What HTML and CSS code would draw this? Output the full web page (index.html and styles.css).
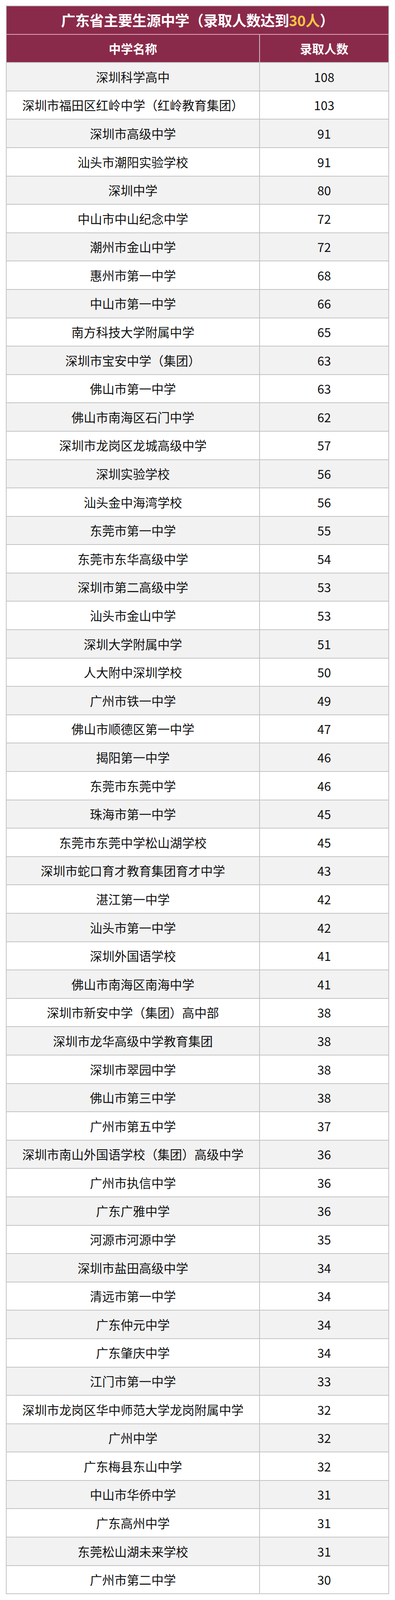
FILE: index.html
```html
<!DOCTYPE html>
<html lang="zh-CN">
<head>
<meta charset="utf-8">
<title>广东省主要生源中学</title>
<link rel="stylesheet" href="styles.css">
</head>
<body>
<div class="table">
  <div class="title">广东省主要生源中学（录取人数达到<span class="hl">30人</span>）</div>
  <div class="row head"><div class="c name">中学名称</div><div class="c num">录取人数</div></div>
  <div class="row"><div class="c name">深圳科学高中</div><div class="c num">108</div></div>
  <div class="row"><div class="c name">深圳市福田区红岭中学（红岭教育集团）</div><div class="c num">103</div></div>
  <div class="row"><div class="c name">深圳市高级中学</div><div class="c num">91</div></div>
  <div class="row"><div class="c name">汕头市潮阳实验学校</div><div class="c num">91</div></div>
  <div class="row"><div class="c name">深圳中学</div><div class="c num">80</div></div>
  <div class="row"><div class="c name">中山市中山纪念中学</div><div class="c num">72</div></div>
  <div class="row"><div class="c name">潮州市金山中学</div><div class="c num">72</div></div>
  <div class="row"><div class="c name">惠州市第一中学</div><div class="c num">68</div></div>
  <div class="row"><div class="c name">中山市第一中学</div><div class="c num">66</div></div>
  <div class="row"><div class="c name">南方科技大学附属中学</div><div class="c num">65</div></div>
  <div class="row"><div class="c name">深圳市宝安中学（集团）</div><div class="c num">63</div></div>
  <div class="row"><div class="c name">佛山市第一中学</div><div class="c num">63</div></div>
  <div class="row"><div class="c name">佛山市南海区石门中学</div><div class="c num">62</div></div>
  <div class="row"><div class="c name">深圳市龙岗区龙城高级中学</div><div class="c num">57</div></div>
  <div class="row"><div class="c name">深圳实验学校</div><div class="c num">56</div></div>
  <div class="row"><div class="c name">汕头金中海湾学校</div><div class="c num">56</div></div>
  <div class="row"><div class="c name">东莞市第一中学</div><div class="c num">55</div></div>
  <div class="row"><div class="c name">东莞市东华高级中学</div><div class="c num">54</div></div>
  <div class="row"><div class="c name">深圳市第二高级中学</div><div class="c num">53</div></div>
  <div class="row"><div class="c name">汕头市金山中学</div><div class="c num">53</div></div>
  <div class="row"><div class="c name">深圳大学附属中学</div><div class="c num">51</div></div>
  <div class="row"><div class="c name">人大附中深圳学校</div><div class="c num">50</div></div>
  <div class="row"><div class="c name">广州市铁一中学</div><div class="c num">49</div></div>
  <div class="row"><div class="c name">佛山市顺德区第一中学</div><div class="c num">47</div></div>
  <div class="row"><div class="c name">揭阳第一中学</div><div class="c num">46</div></div>
  <div class="row"><div class="c name">东莞市东莞中学</div><div class="c num">46</div></div>
  <div class="row"><div class="c name">珠海市第一中学</div><div class="c num">45</div></div>
  <div class="row"><div class="c name">东莞市东莞中学松山湖学校</div><div class="c num">45</div></div>
  <div class="row"><div class="c name">深圳市蛇口育才教育集团育才中学</div><div class="c num">43</div></div>
  <div class="row"><div class="c name">湛江第一中学</div><div class="c num">42</div></div>
  <div class="row"><div class="c name">汕头市第一中学</div><div class="c num">42</div></div>
  <div class="row"><div class="c name">深圳外国语学校</div><div class="c num">41</div></div>
  <div class="row"><div class="c name">佛山市南海区南海中学</div><div class="c num">41</div></div>
  <div class="row"><div class="c name">深圳市新安中学（集团）高中部</div><div class="c num">38</div></div>
  <div class="row"><div class="c name">深圳市龙华高级中学教育集团</div><div class="c num">38</div></div>
  <div class="row"><div class="c name">深圳市翠园中学</div><div class="c num">38</div></div>
  <div class="row"><div class="c name">佛山市第三中学</div><div class="c num">38</div></div>
  <div class="row"><div class="c name">广州市第五中学</div><div class="c num">37</div></div>
  <div class="row"><div class="c name">深圳市南山外国语学校（集团）高级中学</div><div class="c num">36</div></div>
  <div class="row"><div class="c name">广州市执信中学</div><div class="c num">36</div></div>
  <div class="row"><div class="c name">广东广雅中学</div><div class="c num">36</div></div>
  <div class="row"><div class="c name">河源市河源中学</div><div class="c num">35</div></div>
  <div class="row"><div class="c name">深圳市盐田高级中学</div><div class="c num">34</div></div>
  <div class="row"><div class="c name">清远市第一中学</div><div class="c num">34</div></div>
  <div class="row"><div class="c name">广东仲元中学</div><div class="c num">34</div></div>
  <div class="row"><div class="c name">广东肇庆中学</div><div class="c num">34</div></div>
  <div class="row"><div class="c name">江门市第一中学</div><div class="c num">33</div></div>
  <div class="row"><div class="c name">深圳市龙岗区华中师范大学龙岗附属中学</div><div class="c num">32</div></div>
  <div class="row"><div class="c name">广州中学</div><div class="c num">32</div></div>
  <div class="row"><div class="c name">广东梅县东山中学</div><div class="c num">32</div></div>
  <div class="row"><div class="c name">中山市华侨中学</div><div class="c num">31</div></div>
  <div class="row"><div class="c name">广东高州中学</div><div class="c num">31</div></div>
  <div class="row"><div class="c name">东莞松山湖未来学校</div><div class="c num">31</div></div>
  <div class="row"><div class="c name">广州市第二中学</div><div class="c num">30</div></div>
</div>
</body>
</html>
```

FILE: styles.css
```css
html, body {
  margin: 0;
  padding: 0;
  background: #ffffff;
}
body {
  padding: 14px 15px 0 15px;
  font-family: "Noto Sans CJK SC", "Noto Sans", sans-serif;
}
.table {
  width: 982px;
  box-sizing: border-box;
  border: 2px solid #c3c3c3;
  border-bottom: none;
}
.title {
  height: 70.6px;
  border-bottom: 2px solid #d9a6b8;
  background: #8a2a4a;
  color: #ffffff;
  font-size: 37px;
  font-weight: 700;
  display: flex;
  align-items: center;
  justify-content: center;
  line-height: 1;
  letter-spacing: -0.5px;
}
.hl {
  color: #f6c445;
}
.row {
  display: grid;
  grid-template-columns: 649px 1fr;
  height: 70.6px;
  border-bottom: 2px solid #c3c3c3;
  background: #ffffff;
}
.row:nth-child(odd) {
  background: #f2f2f2;
}
.row.head {
  background: #8a2a4a;
  color: #ffffff;
  font-weight: 700;
}
.c {
  display: flex;
  align-items: center;
  justify-content: center;
  font-size: 31.5px;
  line-height: 1;
  color: #111111;
  white-space: nowrap;
}
.head .c {
  color: #ffffff;
  font-size: 31px;
}
.c.name {
  border-right: 2px solid #c3c3c3;
}
.head .c.name {
  border-right-color: #c9c0c4;
}
```
